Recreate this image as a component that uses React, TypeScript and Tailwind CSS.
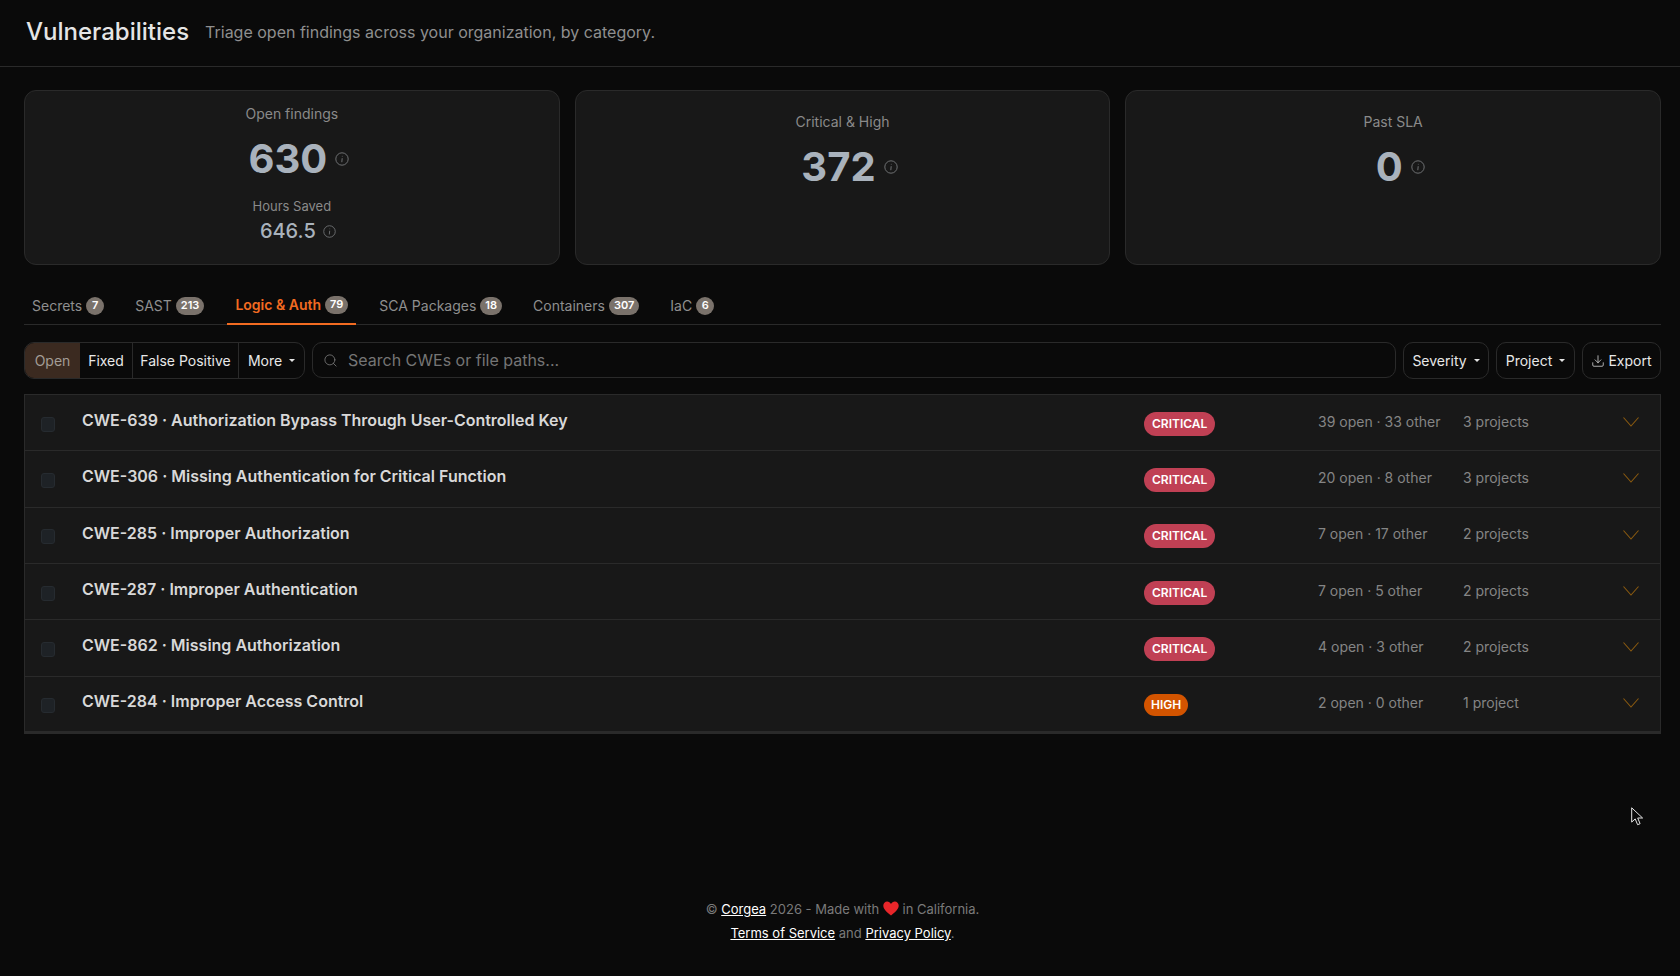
import { Download, Search } from "lucide-react";

const tabs = [
    { name: "Secrets", count: 7 },
    { name: "SAST", count: 213 },
    { name: "Logic & Auth", count: 79, active: true },
    { name: "SCA Packages", count: 18 },
    { name: "Containers", count: 307 },
    { name: "IaC", count: 6 },
];

const rows = [
    { title: "CWE-639 · Authorization Bypass Through User-Controlled Key", severity: "CRITICAL", counts: "39 open · 33 other", projects: "3 projects" },
    { title: "CWE-306 · Missing Authentication for Critical Function", severity: "CRITICAL", counts: "20 open · 8 other", projects: "3 projects" },
    { title: "CWE-285 · Improper Authorization", severity: "CRITICAL", counts: "7 open · 17 other", projects: "2 projects" },
    { title: "CWE-287 · Improper Authentication", severity: "CRITICAL", counts: "7 open · 5 other", projects: "2 projects" },
    { title: "CWE-862 · Missing Authorization", severity: "CRITICAL", counts: "4 open · 3 other", projects: "2 projects" },
    { title: "CWE-284 · Improper Access Control", severity: "HIGH", counts: "2 open · 0 other", projects: "1 project" },
];

function InfoIcon({ size }: { size: number }) {
    return (
        <svg width={size} height={size} viewBox="0 0 14 14" fill="none" stroke="#77797c" strokeWidth="0.9" className="shrink-0">
            <circle cx="7" cy="7" r="6.2" />
            <path d="M7.2 6.2 6.8 10.2" />
            <path d="M7.3 3.9v.6" />
        </svg>
    );
}

function Caret() {
    return <span className="ml-[7px] inline-block h-0 w-0 border-x-[3px] border-t-[3px] border-x-transparent border-t-[#e5e5e5]" />;
}

function StatCard({ label, value, children }: { label: string; value: string; children?: React.ReactNode }) {
    return (
        <div className={`flex flex-col items-center rounded-xl border border-[#2a2a2a] bg-[#181818] ${children ? "pt-[13px]" : "pt-[21px]"}`}>
            <div className="text-sm leading-5 text-[#8a8a8a]">{label}</div>
            <div className="mt-[11px] flex items-center gap-2 pl-[14px]">
                <span className="text-[40px] font-bold leading-[48px] text-[#a9b2bc]">{value}</span>
                <InfoIcon size={14} />
            </div>
            {children}
        </div>
    );
}

function Toolbar() {
    return (
        <div className="mt-[17px] flex items-start gap-[7px] text-sm text-[#e8e8e8]">
            <div className="flex h-[37px] w-[281px] shrink-0 overflow-hidden rounded-[10px] border border-[#2a2a2a]">
                <button className="w-[55px] bg-[#3b2a20] text-[#a39d96]">Open</button>
                <button className="w-[53px] border-r border-[#2a2a2a]">Fixed</button>
                <button className="w-[106px] border-r border-[#2a2a2a]">False Positive</button>
                <button className="flex flex-1 items-center justify-center">
                    More
                    <Caret />
                </button>
            </div>
            <div className="flex h-[36px] flex-1 items-center rounded-[10px] border border-[#2a2a2a] pl-[10px]">
                <Search size={15} strokeWidth={1.25} color="#808080" className="shrink-0" />
                <input placeholder="Search CWEs or file paths..." className="ml-[10px] flex-1 bg-transparent text-base outline-none placeholder:text-[#757575]" />
            </div>
            <button className="flex h-[37px] w-[86px] items-center justify-center rounded-[10px] border border-[#2a2a2a]">
                Severity
                <Caret />
            </button>
            <button className="flex h-[37px] w-[79px] items-center justify-center rounded-[10px] border border-[#2a2a2a]">
                Project
                <Caret />
            </button>
            <button className="flex h-[37px] w-[79px] items-center justify-center gap-[3px] rounded-[10px] border border-[#2a2a2a]">
                <Download size={14} strokeWidth={1.25} />
                Export
            </button>
        </div>
    );
}

function Row({ title, severity, counts, projects }: (typeof rows)[number]) {
    const critical = severity === "CRITICAL";
    return (
        <div className="flex h-[56.33px] items-center border-b border-[#2a2a2a] pl-[16px] last:border-b-2">
            <span className="mt-[3px] h-[15px] w-[14px] shrink-0 rounded-[3px] border border-[#262b30] bg-[#1e2226]" />
            <div className="ml-[27px] -mt-[5px] w-[1062px] text-base font-semibold text-[#d8d8d8]">{title}</div>
            <div className="w-[174px]">
                <span className={`inline-flex items-center rounded-full text-xs font-semibold text-white ${critical ? "h-6 bg-[#c04054] px-2" : "h-[22px] bg-[#d35400] px-[7px]"}`}>
                    {severity}
                </span>
            </div>
            <div className="-mt-[2px] w-[145px] text-sm text-[#858585]">{counts}</div>
            <div className="-mt-[2px] w-[160px] text-sm text-[#858585]">{projects}</div>
            <svg width="16" height="10" viewBox="0 0 16 10" fill="none" stroke="#8a5a10" strokeWidth="1.1" className="-mt-[1px] shrink-0">
                <path d="M.5.5 8 9 15.5.5" />
            </svg>
        </div>
    );
}

export default function App() {
    return (
        <div className="relative h-[976px] overflow-hidden bg-[#0a0a0a] font-['Inter',sans-serif]">
            <header className="flex h-[67px] items-center gap-4 border-b border-[#2a2a2a] pb-[3px] pl-[26px]">
                <h1 className="text-2xl font-medium text-[#e5e5e5]">Vulnerabilities</h1>
                <p className="pt-[1px] text-base text-[#8f8f8f]">Triage open findings across your organization, by category.</p>
            </header>
            <main className="pl-6 pr-[19px] pt-[23px]">
                <div className="grid h-[175px] grid-cols-3 gap-[15px]">
                    <StatCard label="Open findings" value="630">
                        <div className="mt-[13px] text-[13px] leading-5 text-[#8a8a8a]">Hours Saved</div>
                        <div className="mt-[3px] flex items-center gap-[7px] pl-[12px]">
                            <span className="text-xl font-medium leading-6 text-[#a9b2bc]">646.5</span>
                            <InfoIcon size={13} />
                        </div>
                    </StatCard>
                    <StatCard label="Critical & High" value="372" />
                    <StatCard label="Past SLA" value="0" />
                </div>
                <nav className="mt-6 flex h-[36px] gap-[15px] border-b border-[#2a2a2a]">
                    {tabs.map((t) => (
                        <div key={t.name} className={`-mb-px flex h-[36px] items-center gap-1 px-2 pb-[2px] text-sm ${t.active ? "border-b-2 border-[#f26b21] font-semibold text-[#f26b21]" : "text-[#8f8f8f]"}`}>
                            {t.name}
                            <span className="flex h-[18px] min-w-[18px] items-center justify-center rounded-full bg-[#7a726b] px-[5px] text-[11px] font-semibold text-white">{t.count}</span>
                        </div>
                    ))}
                </nav>
                <Toolbar />
                <div className="mt-[15px] border border-[#2a2a2a] bg-[#181818]">
                    {rows.map((r) => (
                        <Row key={r.title} {...r} />
                    ))}
                </div>
                <footer className="mt-[163px] pr-[0px] text-center text-[13px] leading-[24px] text-[#7a7a7a]">
                    <div>
                        © <a className="text-white underline">Corgea</a> 2026 - Made with{" "}
                        <svg width="16" height="15" viewBox="0 0 16 15" className="inline-block align-[-2px]">
                            <path d="M8 14.5C3 10.5.3 8 .3 4.6.3 2.2 2.1.5 4.2.5 5.8.5 7.2 1.4 8 2.9 8.8 1.4 10.2.5 11.8.5c2.1 0 3.9 1.7 3.9 4.1C15.700 8 13 10.500 8 14.500z" fill="#e8262a" />
                        </svg>{" "}
                        in California.
                    </div>
                    <div>
                        <a className="text-white underline">Terms of Service</a> and <a className="text-white underline">Privacy Policy</a>.
                    </div>
                </footer>
            </main>
            <svg width="13" height="19" viewBox="0 0 13 19" className="absolute left-[1631px] top-[807px]" fill="#0a0a0a" stroke="#e5e5e5" strokeWidth="1">
                <path d="M.7.8v14.300l3.500-3.200 2.400 5.800 2.500-1-2.400-5.700h4.900z" />
            </svg>
        </div>
    );
}
